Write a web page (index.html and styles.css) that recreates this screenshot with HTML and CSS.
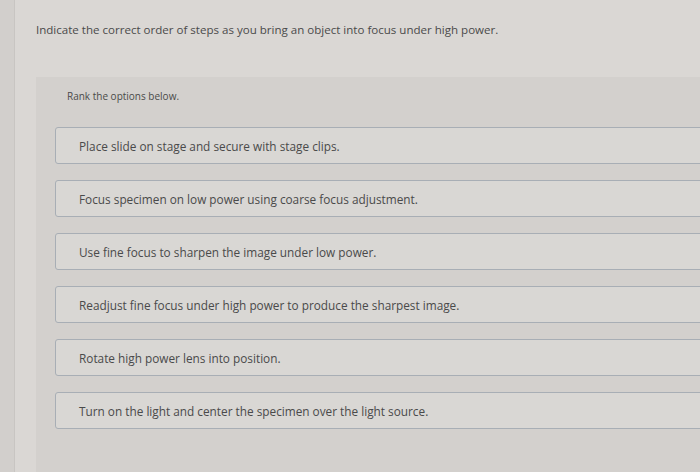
FILE: index.html
```html
<!DOCTYPE html>
<html lang="en">
<head>
    <meta charset="UTF-8">
    <meta name="viewport" content="width=device-width, initial-scale=1.0">
    <title>Rank the steps</title>
    <link rel="stylesheet" href="styles.css">
</head>
<body>

<div class="page">
    <div class="edge"></div>

    <div class="content">
        <p class="question">Indicate the correct order of steps as you bring an object into focus under high power.</p>

        <!-- Ranking panel -->
        <div class="panel">
            <p class="hint">Rank the options below.</p>

            <ul class="options">
                <li class="option">Place slide on stage and secure with stage clips.</li>
                <li class="option">Focus specimen on low power using coarse focus adjustment.</li>
                <li class="option">Use fine focus to sharpen the image under low power.</li>
                <li class="option">Readjust fine focus under high power to produce the sharpest image.</li>
                <li class="option">Rotate high power lens into position.</li>
                <li class="option">Turn on the light and center the specimen over the light source.</li>
            </ul>
        </div>
    </div>
</div>

</body>
</html>
```

FILE: styles.css
```css
/* Basic Reset */
* {
    margin: 0;
    padding: 0;
    box-sizing: border-box;
}
html, body {
    height: 100%;
    overflow: hidden;
}
body {
    font-family: "Open Sans", Arial, sans-serif;
    background-color: #dad7d4;
    color: #4a4a4a;
}
.page {
    display: flex;
    height: 100%;
}
.edge {
    width: 15px;
    flex-shrink: 0;
    background-color: #d2cfcc;
    border-right: 1px solid #c8c5c2;
}
.content {
    flex: 1;
    display: flex;
    flex-direction: column;
    padding-left: 21px;
}
.question {
    font-size: 11.55px;
    margin-top: 22px;
    height: 55px;
}
.panel {
    flex: 1;
    background-color: #d3d0cd;
    padding: 12px 0 0 19px;
}
.hint {
    font-size: 10px;
    margin-left: 12px;
    height: 38px;
}
.options {
    list-style: none;
    display: flex;
    flex-direction: column;
    gap: 16px;
}
.option {
    height: 37px;
    margin-right: -10px;
    padding: 0 23px;
    display: flex;
    align-items: center;
    font-size: 11.8px;
    background-color: #d9d7d4;
    border: 1px solid #a8aeb5;
    border-radius: 3px;
}
```
